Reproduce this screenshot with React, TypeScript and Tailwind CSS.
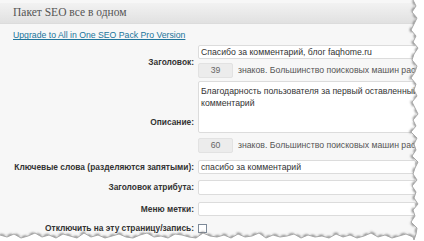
const LABEL = "w-[198px] shrink-0 text-right pr-[4px] font-bold text-[8.4px] text-[#333]";
const INPUT = "flex-1 h-[14px] bg-white border border-[#dcdcdc] rounded-[2px] pl-[2px] text-[8.7px] text-[#333] leading-[12px]";

const rightJag = [0, 3, -1, 4, 1, -2, 3, 0, 5, 1, -1, 4, 2, -2, 3, 1, 4, -1, 2, 5, 0, 3, -2, 4, 1, 3, -1, 5, 2, 0, 4, -1, 3, 1, 5, 0, 2, -2, 4, 3, 1];
const bottomJag = [0, 2, -1, 3, 1, -2, 2, 0, 3, -1, 1, 3, -2, 2, 0, 3, 1, -1, 2, 3, 0, -2, 2, 1, 3, -1, 0, 2, 3, -2, 1, 2, 0, 3, -1, 2, 1, -2, 3, 0, 2, 1, -1, 3, 0, 2, 1, 3, -1, 2, 0, 3, 1, -2, 2, 0, 3, 1, -1, 2];

const TornEdge = () => {
  const right = rightJag.map((d, i) => `${413 + d},${i * 6}`);
  const bottom = bottomJag
    .map((d, i) => `${i * 7},${235 + d}`)
    .filter((_, i) => i * 7 < 412);
  const edge = `M0,235 L${bottom.join(" L")} L413,237 L${[...right].reverse().join(" L")}`;
  const fill = `${edge} L424,0 L424,241 L0,241 Z`;
  return (
    <svg className="absolute inset-0 pointer-events-none" width="424" height="241" viewBox="0 0 424 241">
      <defs>
        <filter id="blur" x="-10%" y="-10%" width="120%" height="120%">
          <feGaussianBlur stdDeviation="0.8" />
        </filter>
      </defs>
      <path d={edge} fill="none" stroke="#7a7a7a" strokeWidth="2.5" strokeDasharray="5 3" filter="url(#blur)" />
      <path d={fill} fill="#ffffff" />
      <path d={edge} fill="none" stroke="#a8a8a8" strokeWidth="1" />
    </svg>
  );
};

const Counter = ({ n }: { n: string }) => (
  <div className="flex items-center">
    <div className="w-[35px] h-[15px] bg-[#ececec] border border-[#e2e2e2] rounded-[2px] text-center text-[8.7px] leading-[13px] text-[#666]">{n}</div>
    <span className="ml-[5px] text-[8.7px] text-[#555] whitespace-nowrap">знаков. Большинство поисковых машин расс</span>
  </div>
);

export default function App() {
  return (
    <div className="relative w-[424px] h-[241px] overflow-hidden bg-white" style={{ fontFamily: '"Liberation Sans", Arial, sans-serif' }}>
      <div className="w-[416px] h-[241px] bg-[#f7f7f7] pt-[3px]">
        <div className="h-[21px] bg-gradient-to-b from-[#f2f2f2] to-[#e1e1e1] border-b border-[#dcdcdc] flex items-center pl-[13px]">
          <span className="text-[11.5px] text-[#555]" style={{ fontFamily: '"Liberation Serif", Georgia, serif' }}>Пакет SEO все в одном</span>
        </div>
        <div className="pl-[13px] pt-[3px] h-[21px] flex items-center">
          <span className="text-[8.7px] text-[#21759b] underline">Upgrade to All in One SEO Pack Pro Version</span>
        </div>
        <div className="flex flex-col overflow-hidden">
          <div className="flex items-start">
            <div className={`${LABEL} pt-[11px]`}>Заголовок:</div>
            <div className="flex-1 flex flex-col">
              <div className={`${INPUT} whitespace-nowrap`}>Спасибо за комментарий, блог faqhome.ru</div>
              <div className="mt-[4px]"><Counter n="39" /></div>
            </div>
          </div>
          <div className="flex items-start mt-[3px]">
            <div className={`${LABEL} pt-[35px]`}>Описание:</div>
            <div className="flex-1 h-[52px] bg-white border border-[#dcdcdc] rounded-[2px] pl-[2px] pt-[3px] text-[8.7px] text-[#333] leading-[12px] whitespace-nowrap">
              Благодарность пользователя за первый оставленный<br />комментарий
            </div>
          </div>
          <div className="flex mt-[5px]">
            <div className="w-[198px] shrink-0" />
            <Counter n="60" />
          </div>
          <div className="flex items-center mt-[7px]">
            <div className={LABEL}>Ключевые слова (разделяются запятыми):</div>
            <div className={`${INPUT} whitespace-nowrap`}>спасибо за комментарий</div>
          </div>
          <div className="flex items-center mt-[6px]">
            <div className={LABEL}>Заголовок атрибута:</div>
            <div className={`${INPUT} h-[15px]`} />
          </div>
          <div className="flex items-center mt-[7px]">
            <div className={LABEL}>Меню метки:</div>
            <div className={INPUT} />
          </div>
          <div className="flex items-center mt-[6px]">
            <div className={LABEL}>Отключить на эту страницу/запись:</div>
            <div className="w-[9px] h-[9px] bg-white border border-[#7d8a99]" />
          </div>
        </div>
      </div>
      <TornEdge />
    </div>
  );
}
